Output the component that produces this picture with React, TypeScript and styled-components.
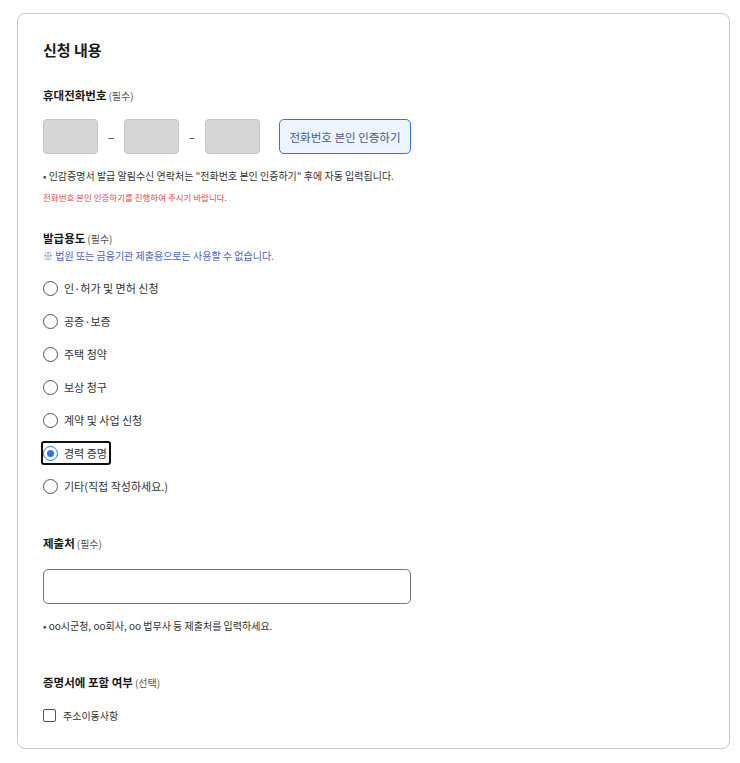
import React, { useState } from 'react';
import styled, { createGlobalStyle } from 'styled-components';

const GlobalStyle = createGlobalStyle`
  html, body {
    margin: 0;
    padding: 0;
    background: #ffffff;
  }
  body {
    font-family: 'Noto Sans CJK KR', 'Noto Sans', sans-serif;
    color: #222;
  }
`;

const Page = styled.div`
  padding: 13px 10px 14px 17px;
`;

const Card = styled.section`
  box-sizing: border-box;
  width: 713px;
  border: 1px solid #c9c9c9;
  border-radius: 8px;
  padding: 25px 26px 25px 25px;
`;

const Title = styled.h2`
  margin: 0 0 26px;
  font-size: 15px;
  font-weight: 700;
  line-height: 22px;
  color: #1a1a1a;
`;

const Section = styled.div<{ $gap?: number }>`
  margin-bottom: ${({ $gap }) => $gap ?? 0}px;
`;

const Label = styled.div`
  font-size: 11.5px;
  font-weight: 700;
  line-height: 16px;
  color: #1a1a1a;
`;

const Tag = styled.span`
  font-size: 10px;
  font-weight: 400;
  color: #555;
  margin-left: 2px;
`;

const PhoneRow = styled.div`
  display: flex;
  align-items: center;
  margin-top: 15px;
`;

const PhoneBox = styled.div`
  box-sizing: border-box;
  width: 55px;
  height: 35px;
  background: #d6d6d6;
  border: 1px solid #c4c4c4;
  border-radius: 4px;
`;

const Dash = styled.span`
  width: 26px;
  text-align: center;
  font-size: 12px;
  color: #333;
`;

const VerifyButton = styled.button`
  box-sizing: border-box;
  margin-left: 19px;
  width: 132px;
  height: 35px;
  border: 1px solid #2f74e8;
  border-radius: 5px;
  background: #edf3ff;
  color: #4a5a8c;
  font-family: inherit;
  font-size: 11.5px;
  padding: 0;
  cursor: pointer;
`;

const Note = styled.p<{ $top?: number }>`
  margin: ${({ $top }) => $top ?? 0}px 0 0;
  font-size: 10px;
  line-height: 14px;
  color: #333;
`;

const ErrorNote = styled.p`
  margin: 8px 0 0;
  font-size: 8.5px;
  line-height: 12px;
  color: #e3474f;
`;

const Info = styled.p`
  margin: 2px 0 0;
  font-size: 10px;
  line-height: 14px;
  color: #4b63c6;
`;

const RadioList = styled.div`
  display: flex;
  flex-direction: column;
  gap: 13px;
  margin-top: 15px;
`;

const RadioRow = styled.label<{ $focused?: boolean }>`
  align-self: flex-start;
  display: flex;
  align-items: center;
  gap: 6px;
  height: 20px;
  padding: 0 2px 0 0;
  margin: -2px 0 -2px -2px;
  border: 2px solid ${({ $focused }) => ($focused ? '#111' : 'transparent')};
  border-radius: 3px;
  font-size: 11px;
  color: #333;
  cursor: pointer;
`;

const RadioCircle = styled.span<{ $checked?: boolean }>`
  box-sizing: border-box;
  width: 15px;
  height: 15px;
  border-radius: 50%;
  border: 1px solid ${({ $checked }) => ($checked ? '#2f74e8' : '#555')};
  display: flex;
  align-items: center;
  justify-content: center;
  background: #fff;

  &::after {
    content: '';
    width: 7px;
    height: 7px;
    border-radius: 50%;
    background: ${({ $checked }) => ($checked ? '#2f74e8' : 'transparent')};
  }
`;

const TextInput = styled.input`
  box-sizing: border-box;
  display: block;
  width: 368px;
  height: 35px;
  margin-top: 17px;
  border: 1px solid #777;
  border-radius: 5px;
  background: #fff;
  outline: none;
`;

const CheckRow = styled.label`
  display: flex;
  align-items: center;
  gap: 7px;
  margin-top: 17px;
  font-size: 10px;
  color: #333;
`;

const CheckBox = styled.span`
  box-sizing: border-box;
  width: 13px;
  height: 13px;
  border: 1px solid #555;
  border-radius: 2px;
  background: #fff;
`;

const purposes = [
  '인·허가 및 면허 신청',
  '공증·보증',
  '주택 청약',
  '보상 청구',
  '계약 및 사업 신청',
  '경력 증명',
  '기타(직접 작성하세요.)',
];

export default function App() {
  const [selected, setSelected] = useState('경력 증명');

  return (
    <>
      <GlobalStyle />
      <Page>
        <Card>
          <Title>신청 내용</Title>

          <Section $gap={27}>
            <Label>
              휴대전화번호<Tag>(필수)</Tag>
            </Label>
            <PhoneRow>
              <PhoneBox />
              <Dash>–</Dash>
              <PhoneBox />
              <Dash>–</Dash>
              <PhoneBox />
              <VerifyButton type="button">전화번호 본인 인증하기</VerifyButton>
            </PhoneRow>
            <Note $top={15}>• 인감증명서 발급 알림수신 연락처는 "전화번호 본인 인증하기" 후에 자동 입력됩니다.</Note>
            <ErrorNote>전화번호 본인 인증하기를 진행하여 주시기 바랍니다.</ErrorNote>
          </Section>

          <Section $gap={39}>
            <Label>
              발급용도<Tag>(필수)</Tag>
            </Label>
            <Info>※ 법원 또는 금융기관 제출용으로는 사용할 수 없습니다.</Info>
            <RadioList>
              {purposes.map((p) => (
                <RadioRow
                  key={p}
                  $focused={selected === p}
                  onClick={() => setSelected(p)}
                >
                  <RadioCircle $checked={selected === p} />
                  {p}
                </RadioRow>
              ))}
            </RadioList>
          </Section>

          <Section $gap={41}>
            <Label>
              제출처<Tag>(필수)</Tag>
            </Label>
            <TextInput type="text" />
            <Note $top={15}>• oo시군청, oo회사, oo 법무사 등 제출처를 입력하세요.</Note>
          </Section>

          <Section>
            <Label>
              증명서에 포함 여부<Tag>(선택)</Tag>
            </Label>
            <CheckRow>
              <CheckBox />
              주소이동사항
            </CheckRow>
          </Section>
        </Card>
      </Page>
    </>
  );
}
